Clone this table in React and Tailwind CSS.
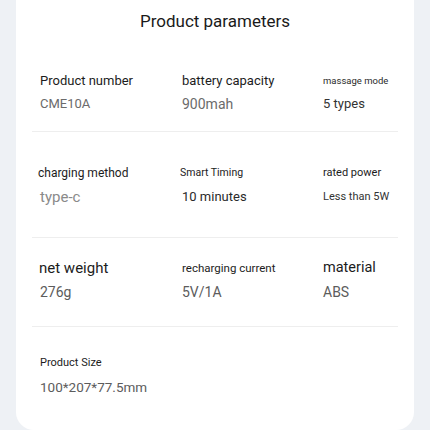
const rows = [
  {
    h: 'h-[82px]', pt: 'pt-[21px]', gap: 'mt-[3px]',
    cells: [
      { label: 'Product number', lc: 'text-[13px] text-[#1c1c1c]', value: 'CME10A', vc: 'text-[13px] text-[#6b6b6b]' },
      { label: 'battery capacity', lc: 'text-[13px] text-[#1c1c1c]', value: '900mah', vc: 'text-[14px] text-[#6b6b6b]' },
      { label: 'massage mode', lc: 'text-[9.5px] text-[#2a2a2a]', value: '5 types', vc: 'text-[13px] text-[#333]' },
    ],
  },
  {
    h: 'h-[106px]', pt: 'pt-[31px]', gap: 'mt-[4px]',
    cells: [
      { label: 'charging method', lc: 'text-[12px] text-[#1c1c1c] -ml-[2px]', value: 'type-c', vc: 'text-[15px] text-[#8a8a8a]' },
      { label: 'Smart Timing', lc: 'text-[10.5px] text-[#1c1c1c] -ml-[2px]', value: '10 minutes', vc: 'text-[13px] text-[#2a2a2a]' },
      { label: 'rated power', lc: 'text-[11px] text-[#1c1c1c]', value: 'Less than 5W', vc: 'text-[11px] text-[#333]' },
    ],
  },
  {
    h: 'h-[89px]', pt: 'pt-[20px]', gap: 'mt-[4px]',
    cells: [
      { label: 'net weight', lc: 'text-[15px] text-[#1c1c1c] -ml-[1px]', value: '276g', vc: 'text-[14px] text-[#5c5c5c]' },
      { label: 'recharging current', lc: 'text-[11.5px] text-[#1c1c1c]', value: '5V/1A', vc: 'text-[14px] text-[#5c5c5c]' },
      { label: 'material', lc: 'text-[14.5px] text-[#1c1c1c]', value: 'ABS', vc: 'text-[14px] text-[#5c5c5c]' },
    ],
  },
];

export default function App() {
  return (
    <div className="w-[430px] h-[430px] overflow-hidden bg-[#eef1f5] px-4 font-['Roboto',sans-serif]">
      <div className="h-full bg-white rounded-b-[18px] px-4">
        <div className="h-[50px] flex items-start justify-center pt-[9px]">
          <h1 className="text-[17px] leading-[24px] text-[#1a1a1a]">Product parameters</h1>
        </div>

        {rows.map((row, i) => (
          <div key={i} className={`${row.h} ${row.pt} border-b border-[#eeeeee] grid grid-cols-[142px_141px_1fr] pl-2`}>
            {row.cells.map((c) => (
              <div key={c.label} className="flex flex-col">
                <span className={`${c.lc} leading-[20px] whitespace-nowrap`}>{c.label}</span>
                <span className={`${c.vc} ${row.gap} leading-[20px] whitespace-nowrap`}>{c.value}</span>
              </div>
            ))}
          </div>
        ))}

        <div className="pt-[26px] pl-2 flex flex-col">
          <span className="text-[11px] leading-[20px] text-[#1c1c1c]">Product Size</span>
          <span className="text-[13.5px] leading-[20px] mt-[4px] text-[#5c5c5c]">100*207*77.5mm</span>
        </div>
      </div>
    </div>
  );
}
